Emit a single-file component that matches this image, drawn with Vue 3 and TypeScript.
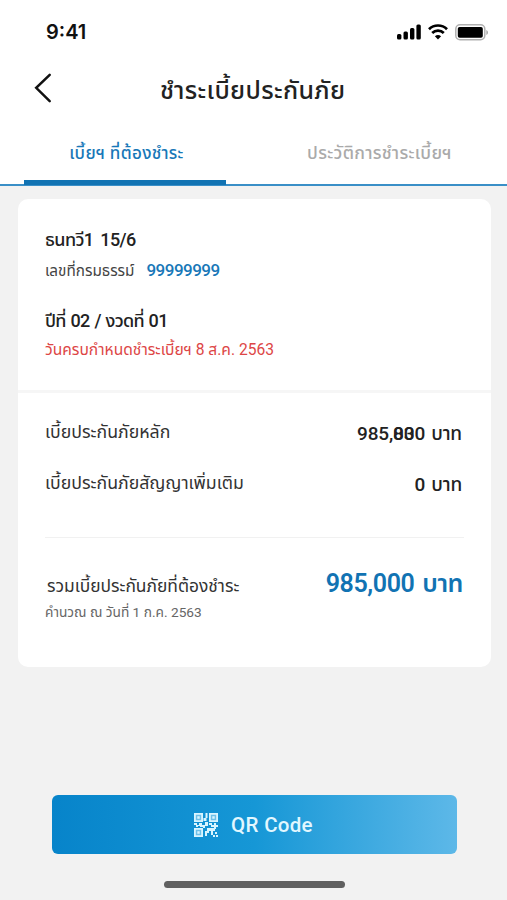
<script setup lang="ts">
interface Premium {
  label: string
  head: string
  middle?: string
  ghost?: string
  tail: string
}

const premiums: Premium[] = [
  { label: 'เบี้ยประกันภัยหลัก', head: '985,', middle: '00', ghost: '83', tail: '0 บาท' },
  { label: 'เบี้ยประกันภัยสัญญาเพิ่มเติม', head: '0', tail: ' บาท' },
]
</script>

<template>
  <div class="screen">
    <header class="top">
      <div class="status">
        <span class="time">9:41</span>
        <div class="status-icons">
          <svg class="signal" width="24" height="16" viewBox="0 0 24 16">
            <rect x="0" y="10" width="4.4" height="5.4" rx="1.5" />
            <rect x="6.5" y="7.5" width="4.4" height="7.9" rx="1.5" />
            <rect x="13" y="4" width="4.4" height="11.4" rx="1.5" />
            <rect x="19.4" y="0.6" width="4.4" height="14.8" rx="1.5" />
          </svg>
          <svg class="wifi" width="20" height="16" viewBox="0 0 20 16">
            <path d="M1 5.2a12.8 12.8 0 0 1 18 0M4.2 9a8.3 8.3 0 0 1 11.6 0" fill="none" stroke="#000" stroke-width="2.7" />
            <path d="M6.9 12.2a4.8 4.8 0 0 1 6.2 0L10 15.4z" />
          </svg>
          <svg class="battery" width="34" height="17" viewBox="0 0 34 17">
            <rect x="0.8" y="0.8" width="29" height="15" rx="4.2" fill="#fff" stroke="#b0b0b0" stroke-width="1.5" />
            <rect x="2.8" y="2.9" width="25" height="10.8" rx="1.8" />
            <path d="M31.3 6v5c2.3-.8 2.3-4.2 0-5z" fill="#aaa" />
          </svg>
        </div>
      </div>
      <div class="titlebar">
        <svg class="back" width="18" height="30" viewBox="0 0 18 30">
          <path d="M15.7 1.8 2.2 14.8 15.7 28.2" fill="none" stroke="#111" stroke-width="2.5" stroke-linecap="round" />
        </svg>
        <h1>ชำระเบี้ยประกันภัย</h1>
      </div>
      <nav class="tabs">
        <button class="tab active">เบี้ยฯ ที่ต้องชำระ</button>
        <button class="tab">ประวัติการชำระเบี้ยฯ</button>
      </nav>
    </header>

    <main class="card">
      <section class="policy">
        <p class="name">ธนทวี1 15/6</p>
        <p class="number"><span>เลขที่กรมธรรม์</span><strong>99999999</strong></p>
        <p class="period">ปีที่ 02 / งวดที่ 01</p>
        <p class="due">วันครบกำหนดชำระเบี้ยฯ 8 ส.ค. 2563</p>
      </section>
      <section class="premiums">
        <div v-for="item in premiums" :key="item.label" class="row">
          <span class="label">{{ item.label }}</span>
          <span class="amount">{{ item.head }}<span v-if="item.middle" class="ghost" :data-ghost="item.ghost">{{ item.middle }}</span>{{ item.tail }}</span>
        </div>
      </section>
      <section class="total">
        <div class="row sum">
          <span class="label">รวมเบี้ยประกันภัยที่ต้องชำระ</span>
          <span class="grand">985,000 บาท</span>
        </div>
        <p class="calc">คำนวณ ณ วันที่ 1 ก.ค. 2563</p>
      </section>
    </main>

    <button class="qr">
      <svg width="24" height="24" viewBox="0 0 24 24" fill="#d9f5ff">
        <path fill="#6fc0e8" d="M1 1h7v7H1zM16 1h7v7h-7zM1 16h7v7H1z" />
        <path fill-rule="evenodd" d="M0 0h9v9H0zM1.8 1.8v5.4h5.4V1.8zM15 0h9v9h-9zM16.8 1.8v5.4h5.4V1.8zM0 15h9v9H0zM1.8 16.8v5.4h5.4v-5.4z" />
        <path d="M3.3 3.3h2.4v2.4H3.3zM18.3 3.3h2.4v2.4h-2.4zM3.3 18.3h2.4v2.4H3.3zM11.5 0h2v5h-1v3h-3V5h2zM0 10h3v2h2v-2h3v2h3V9h3v4h-3v2H9v-1H6v-1H4v1H2v-2H0zM15 10h3v2h2v-2h2v2h2v2h-2v2h-2v-2h-3v-2h-2zM13 15h8v3h-2v4h-2v-4h-2v2h-2v3h-2v-5h2zM21 19h2v2h-2zM19 22h2v2h-2zM22 22h2v2h-2z" />
      </svg>
      <span>QR Code</span>
    </button>
    <div class="home"></div>
  </div>
</template>

<style>
body { margin: 0; }
</style>

<style scoped>
* { box-sizing: border-box; }
.screen {
  width: 507px;
  height: 900px;
  background: #f2f2f2;
  font-family: Roboto, "Noto Sans Thai", "Noto Sans", sans-serif;
  color: #222;
  overflow: hidden;
}
p, h1 { margin: 0; font-weight: 500; white-space: nowrap; }
.top { height: 186px; background: #fff; border-bottom: 2px solid #3a8fc7; }
.status { height: 60px; padding: 20px 18px 0 46px; display: flex; justify-content: space-between; }
.time { font: 600 20px/24px Inter, sans-serif; color: #111; }
.status-icons { display: flex; align-items: center; gap: 7px; height: 24px; }
.titlebar { height: 60px; padding: 13px 0 0 34px; display: flex; }
h1 { margin-left: 108px; font-size: 25px; line-height: 35px; letter-spacing: 0.35px; }
.tabs { height: 65px; padding: 0 24px; display: flex; }
.tab { width: 202px; padding: 0 0 0 3px; border: 0; border-bottom: 5px solid transparent; background: none; font-family: inherit; font-weight: 500; font-size: 17px; letter-spacing: 0.35px; line-height: 66px; color: #aaa; white-space: nowrap; }
.tab + .tab { margin-left: 52px; padding-left: 1px; font-size: 17.6px; letter-spacing: 0.3px; }
.tab.active { color: #1878b8; border-color: #1173b3; }
.card { margin: 13px 16px 0 18px; height: 468px; border-radius: 10px; background: #fff; }
.policy { height: 194px; padding: 28px 27px 0; border-bottom: 3px solid #f6f6f6; }
.name, .period { font-size: 18px; line-height: 26px; }
.name { letter-spacing: -0.6px; word-spacing: 3px; }
.period { letter-spacing: -0.7px; word-spacing: 1px; margin-top: 23px; }
.number { margin-top: 2px; font-size: 15.3px; font-weight: 400; line-height: 32px; height: 30px; color: #444; display: flex; gap: 12px; }
.number strong { font-size: 17px; font-weight: 500; letter-spacing: -0.52px; color: #1878b8; line-height: 30px; }
.due { font-size: 15.6px; font-weight: 400; line-height: 32px; color: #dd4646; }
.premiums { margin: 0 27px; height: 145px; padding-top: 15px; border-bottom: 1px solid #f1f1f1; }
.row { display: flex; justify-content: space-between; align-items: center; height: 51px; white-space: nowrap; }
.label { font-size: 17.7px; color: #333; margin-top: -2px; }
.amount { font-size: 19px; line-height: 26px; font-weight: 500; letter-spacing: -0.15px; word-spacing: 1.5px; margin-right: 2px; }
.ghost { display: inline-block; position: relative; line-height: 26px; }
.ghost::after { content: attr(data-ghost); position: absolute; left: 0; top: 0; line-height: 26px; }
.total { padding: 20px 27px 0; }
.sum .label { padding: 7px 0 0 2px; margin: 0; font-size: 17.4px; }
.grand { font-size: 25px; font-weight: 600; letter-spacing: -0.4px; word-spacing: 2px; margin-right: 1px; color: #1173b3; }
.calc { margin-top: -9px; font-size: 13.7px; font-weight: 400; line-height: 24px; color: #666; }
.qr { margin: 128px 0 0 52px; width: 405px; height: 59px; padding: 0 2px 0 0; border: 0; border-radius: 6px; background: linear-gradient(90deg, #0784ca, #1697d6 50%, #5db8e8); display: flex; align-items: center; justify-content: center; gap: 13px; color: #e2f7ff; font: 500 20.5px Roboto, sans-serif; letter-spacing: 0.3px; }
.home { width: 181px; height: 7px; margin: 27px 0 0 164px; border-radius: 4px; background: #606060; }
</style>
